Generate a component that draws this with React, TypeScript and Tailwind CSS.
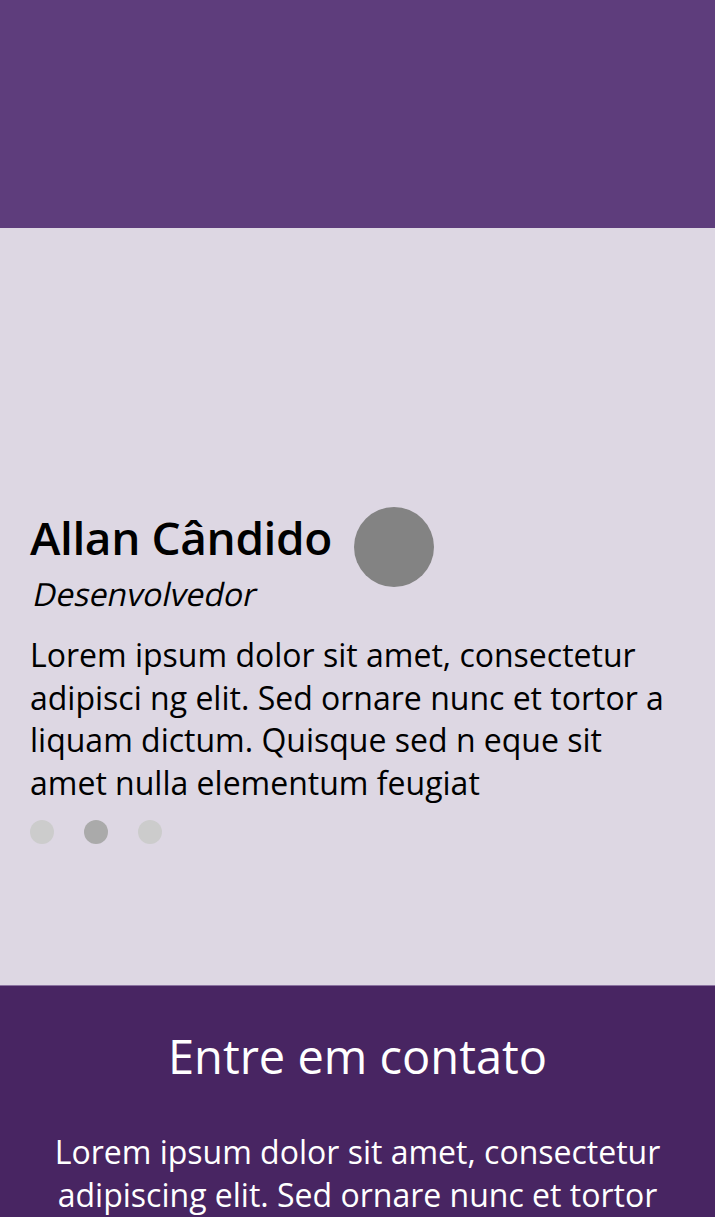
export default function App() {
  return (
    <div className="min-h-[1217px] w-full overflow-hidden font-['Open_Sans',sans-serif]">
      <header className="h-[228px] bg-[#5e3d7c]" />

      <section className="h-[757px] bg-[#ddd7e3] px-[30px] pt-[279px]">
        <div className="flex items-start gap-[22px]">
          <h1 className="text-[46px] font-semibold leading-[60px] tracking-[-0.4px] text-black">Allan Cândido</h1>
          <div className="h-[80px] w-[80px] rounded-full bg-[#838383]" />
        </div>
        <p className="-mt-[13px] pl-[4px] text-[32px] leading-[40px] text-black">
          <span className="inline-block skew-x-[-12deg]">Desenvolvedor</span>
        </p>
        <p className="mt-[20px] text-[32px] leading-[42.7px] text-black">
          Lorem ipsum dolor sit amet, consectetur adipisci ng elit. Sed ornare nunc et tortor a liquam dictum. Quisque
          sed n eque sit amet nulla elementum feugiat
        </p>
        <div className="mt-[15px] flex gap-[30px]">
          <span className="h-[24px] w-[24px] rounded-full bg-[#cccccc]" />
          <span className="h-[24px] w-[24px] rounded-full bg-[#aaaaaa]" />
          <span className="h-[24px] w-[24px] rounded-full bg-[#cccccc]" />
        </div>
      </section>

      <section className="border-t border-[#8a72a0] bg-[#482562] px-[45px] pb-[40px] pt-[40px] text-center text-white">
        <h2 className="text-[47px] font-normal leading-[60px]">Entre em contato</h2>
        <p className="mt-[45px] text-[32px] leading-[42.7px]">
          Lorem ipsum dolor sit amet, consectetur adipiscing elit. Sed ornare nunc et tortor a liquam dictum.
        </p>
      </section>
    </div>
  );
}
